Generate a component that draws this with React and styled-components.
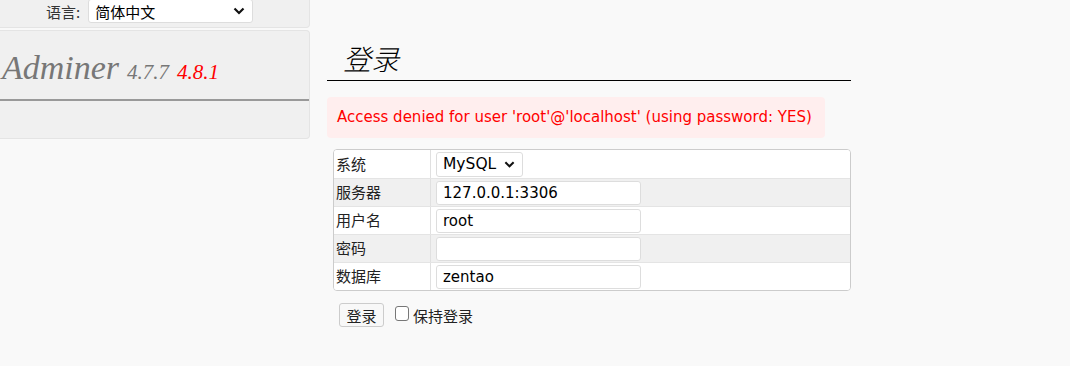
import React from "react";
import styled, { createGlobalStyle } from "styled-components";

const GlobalStyle = createGlobalStyle`
  html, body {
    margin: 0;
    padding: 0;
    background: #f9f9f9;
    font-family: "DejaVu Sans", "Noto Sans CJK SC", sans-serif;
    color: #000;
    overflow: hidden;
  }
`;

const Page = styled.div`
  display: flex;
  align-items: flex-start;
  width: 1070px;
  height: 366px;
`;

const Sidebar = styled.div`
  width: 310px;
  display: flex;
  flex-direction: column;
  gap: 2px;
`;

const Panel = styled.div`
  box-sizing: border-box;
  background: #f0f0f0;
  border: 1px solid #e4e4e4;
  border-left: 0;
  border-radius: 0 4px 4px 0;
`;

const LangBox = styled(Panel)`
  margin-top: -6px;
  height: 34px;
  display: flex;
  align-items: center;
  padding-left: 46px;
  gap: 8px;
  font-family: "Noto Sans CJK SC", sans-serif;
  font-size: 15px;
  color: #333;
`;

const FakeSelect = styled.div`
  box-sizing: border-box;
  width: ${(p) => p.$width}px;
  height: ${(p) => p.$height}px;
  background: #fff;
  border: 1px solid #ddd;
  border-radius: 3px;
  display: flex;
  align-items: center;
  justify-content: space-between;
  padding: 0 7px 0 6px;
  font-family: ${(p) => p.$font};
  font-size: ${(p) => p.$size}px;
  color: #000;
`;

const LogoBox = styled(Panel)`
  height: 109px;
  display: flex;
  flex-direction: column;
`;

const Logo = styled.div`
  height: 70px;
  box-sizing: border-box;
  border-bottom: 2px solid #999;
  padding: 17px 0 0 2px;
  font-family: "Liberation Serif", serif;
  font-style: italic;
  color: #777;
  white-space: nowrap;
  line-height: 40px;
`;

const LogoName = styled.span`
  font-size: 34px;
`;

const Version = styled.span`
  font-size: 21px;
  margin-left: 8px;
  color: ${(p) => (p.$new ? "#f00" : "#777")};
`;

const Main = styled.div`
  margin-left: 17px;
  width: 524px;
  padding-top: 37px;
`;

const Heading = styled.h2`
  margin: 0;
  padding-left: 16px;
  height: 43px;
  border-bottom: 1px solid #000;
  font-family: "Noto Sans CJK SC", sans-serif;
  font-style: italic;
  font-weight: 300;
  font-size: 28px;
  line-height: 42px;
`;

const ErrorBox = styled.div`
  margin-top: 16px;
  width: 498px;
  height: 41px;
  box-sizing: border-box;
  padding-left: 10px;
  background: #ffeeee;
  border-radius: 4px;
  color: #f00;
  font-size: 15px;
  line-height: 41px;
  white-space: nowrap;
`;

const Form = styled.div`
  margin: 11px 0 0 6px;
  width: 518px;
  box-sizing: border-box;
  border: 1px solid #ccc;
  border-radius: 4px;
  background: #fff;
  overflow: hidden;
`;

const Row = styled.div`
  display: grid;
  grid-template-columns: 97px 1fr;
  box-sizing: border-box;
  height: 28px;
  background: ${(p) => (p.$alt ? "#f0f0f0" : "#fff")};
  & + & {
    border-top: 1px solid #e4e4e4;
  }
`;

const Label = styled.div`
  border-right: 1px solid #e0e0e0;
  display: flex;
  align-items: center;
  padding: 0 0 2px 2px;
  font-family: "Noto Sans CJK SC", sans-serif;
  font-size: 15px;
  color: #222;
`;

const Cell = styled.div`
  display: flex;
  align-items: center;
  padding-left: 5px;
`;

const Input = styled.div`
  box-sizing: border-box;
  width: 205px;
  height: 24px;
  background: #fff;
  border: 1px solid #ddd;
  border-radius: 3px;
  padding-left: 6px;
  display: flex;
  align-items: center;
  font-size: 15px;
  color: #000;
`;

const Actions = styled.div`
  margin: 12px 0 0 12px;
  display: flex;
  align-items: center;
  font-family: "Noto Sans CJK SC", sans-serif;
  font-size: 15px;
  color: #222;
`;

const Button = styled.div`
  box-sizing: border-box;
  width: 45px;
  height: 24px;
  border: 1px solid #ccc;
  border-radius: 3px;
  background: #f8f8f8;
  display: flex;
  align-items: center;
  justify-content: center;
  font-size: 15px;
  color: #222;
`;

const Check = styled.span`
  box-sizing: border-box;
  width: 14px;
  height: 15px;
  margin: 0 4px 3px 11px;
  border: 1px solid #777;
  border-radius: 3px;
  background: #fff;
`;

const Chevron = ({ size = 12 }) => (
  <svg width={size} height={size} viewBox="0 0 12 12">
    <path d="M1.5 3.5 L6 8 L10.5 3.5" fill="none" stroke="#111" strokeWidth="2.2" />
  </svg>
);

const fields = [
  { label: "服务器", value: "127.0.0.1:3306" },
  { label: "用户名", value: "root" },
  { label: "密码", value: "" },
  { label: "数据库", value: "zentao" },
];

export default function App() {
  return (
    <Page>
      <GlobalStyle />
      <Sidebar>
        <LangBox>
          语言:
          <FakeSelect $width={165} $height={24} $size={15} $font={`"Noto Sans CJK SC", sans-serif`}>
            简体中文
            <Chevron />
          </FakeSelect>
        </LangBox>
        <LogoBox>
          <Logo>
            <LogoName>Adminer</LogoName>
            <Version>4.7.7</Version>
            <Version $new>4.8.1</Version>
          </Logo>
        </LogoBox>
      </Sidebar>
      <Main>
        <Heading>登录</Heading>
        <ErrorBox>Access denied for user 'root'@'localhost' (using password: YES)</ErrorBox>
        <Form>
          <Row>
            <Label>系统</Label>
            <Cell>
              <FakeSelect $width={87} $height={25} $size={15.5} $font={`"DejaVu Sans", sans-serif`}>
                MySQL
                <Chevron size={11} />
              </FakeSelect>
            </Cell>
          </Row>
          {fields.map((f, i) => (
            <Row key={f.label} $alt={i % 2 === 0}>
              <Label>{f.label}</Label>
              <Cell>
                <Input>{f.value}</Input>
              </Cell>
            </Row>
          ))}
        </Form>
        <Actions>
          <Button>登录</Button>
          <Check />
          保持登录
        </Actions>
      </Main>
    </Page>
  );
}
